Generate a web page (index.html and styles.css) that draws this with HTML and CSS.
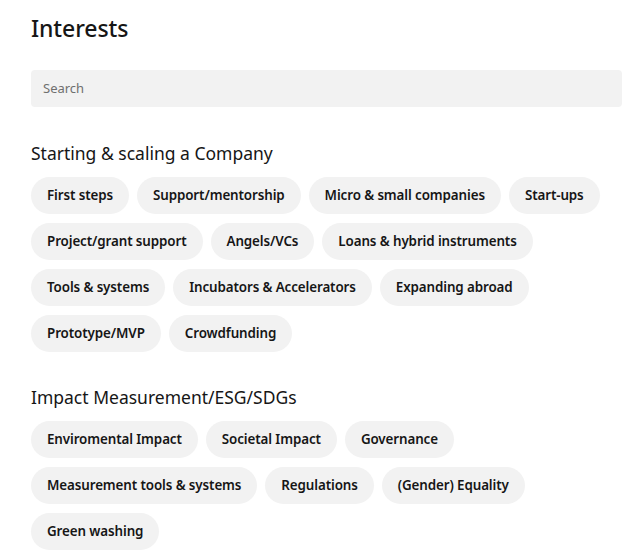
FILE: index.html
```html
<!DOCTYPE html>
<html>
<head>
<meta charset="utf-8">
<link rel="stylesheet" href="styles.css">
</head>
<body>
<main class="page">
  <h1 class="title">Interests</h1>
  <div class="search">Search</div>

  <section class="group">
    <h2 class="group-title">Starting &amp; scaling a Company</h2>
    <div class="chips">
      <span class="chip">First steps</span>
      <span class="chip">Support/mentorship</span>
      <span class="chip">Micro &amp; small companies</span>
      <span class="chip">Start-ups</span>
      <span class="chip">Project/grant support</span>
      <span class="chip">Angels/VCs</span>
      <span class="chip">Loans &amp; hybrid instruments</span>
      <span class="chip">Tools &amp; systems</span>
      <span class="chip">Incubators &amp; Accelerators</span>
      <span class="chip">Expanding abroad</span>
      <span class="chip">Prototype/MVP</span>
      <span class="chip">Crowdfunding</span>
    </div>
  </section>

  <section class="group">
    <h2 class="group-title">Impact Measurement/ESG/SDGs</h2>
    <div class="chips">
      <span class="chip">Enviromental Impact</span>
      <span class="chip">Societal Impact</span>
      <span class="chip">Governance</span>
      <span class="chip">Measurement tools &amp; systems</span>
      <span class="chip">Regulations</span>
      <span class="chip">(Gender) Equality</span>
      <span class="chip">Green washing</span>
    </div>
  </section>
</main>
</body>
</html>
```

FILE: styles.css
```css
html, body {
  margin: 0;
  padding: 0;
  background: #ffffff;
}
body {
  font-family: "Noto Sans", "Liberation Sans", sans-serif;
  color: #161616;
}
.page {
  padding: 12px 17px 0 31px;
}
.title {
  margin: 0;
  font-size: 23px;
  line-height: 32px;
  font-weight: 500;
  letter-spacing: -0.1px;
}
.search {
  margin-top: 26px;
  height: 37px;
  line-height: 37px;
  background: #f2f2f2;
  border-radius: 4px;
  padding: 0 12px;
  font-size: 13px;
  color: #6f6f6f;
}
.group {
  margin-top: 34px;
}
.group + .group {
  margin-top: 33px;
}
.group-title {
  margin: 0 0 12px;
  font-size: 17.5px;
  line-height: 24px;
  font-weight: 400;
}
.chips {
  display: flex;
  flex-wrap: wrap;
  gap: 9px 8px;
}
.chip {
  display: inline-block;
  height: 37px;
  line-height: 37px;
  padding: 0 16px;
  border-radius: 19px;
  background: #f2f2f2;
  font-size: 13.4px;
  font-weight: 600;
  letter-spacing: -0.11px;
  white-space: nowrap;
}
```
